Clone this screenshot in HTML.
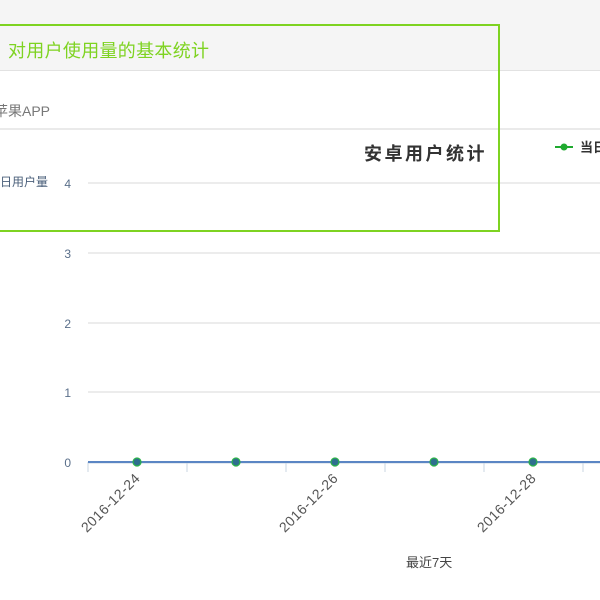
<!DOCTYPE html>
<html><head><meta charset="utf-8"><style>
body{margin:0;width:600px;height:600px;overflow:hidden;background:#fff;position:relative;font-family:"Liberation Sans","Noto Sans CJK SC",sans-serif}
.top{position:absolute;left:0;top:0;width:600px;height:70px;background:#f5f5f5;border-bottom:1px solid #e2e2e2}
.box{position:absolute;left:-3px;top:24px;width:499px;height:204px;border:2px solid #7ed321;box-sizing:content-box}
.t{position:absolute;left:8px;top:37px;font-size:18px;color:#7ed321;letter-spacing:0.3px}
.a{position:absolute;left:-6px;top:101px;font-size:14px;color:#777}
.l{position:absolute;left:0;top:128px;width:600px;height:2px;background:#eaeaea}
</style></head><body>
<div class="top"></div>
<div class="t">对用户使用量的基本统计</div>
<div class="a">苹果APP</div>
<div class="l"></div>
<svg width="600" height="600" style="position:absolute;left:0;top:0" font-family="Liberation Sans, Noto Sans CJK SC, sans-serif">
<g stroke="#e6e6e6" stroke-width="1.5">
<line x1="88" y1="183" x2="600" y2="183"/><line x1="88" y1="253" x2="600" y2="253"/><line x1="88" y1="323" x2="600" y2="323"/><line x1="88" y1="392" x2="600" y2="392"/>
</g>
<g stroke="#c8d4e0" stroke-width="1"><line x1="88" y1="462" x2="88" y2="472"/><line x1="187" y1="462" x2="187" y2="472"/><line x1="286" y1="462" x2="286" y2="472"/><line x1="385" y1="462" x2="385" y2="472"/><line x1="484" y1="462" x2="484" y2="472"/><line x1="583" y1="462" x2="583" y2="472"/><line x1="88" y1="463" x2="600" y2="463"/></g>
<line x1="88" y1="462" x2="600" y2="462" stroke="#5b86c4" stroke-width="2"/>
<g fill="#2e6e8e" stroke="#2cb34a" stroke-width="1.2"><circle cx="137" cy="462" r="4"/><circle cx="236" cy="462" r="4"/><circle cx="335" cy="462" r="4"/><circle cx="434" cy="462" r="4"/><circle cx="533" cy="462" r="4"/></g>
<g fill="#5a6f8a" font-size="12" text-anchor="end"><text x="71" y="188">4</text><text x="71" y="258">3</text><text x="71" y="328">2</text><text x="71" y="397">1</text><text x="71" y="467">0</text></g>
<text x="0" y="186" font-size="12" fill="#4a5f7a">日用户量</text>
<text x="364" y="160" font-size="18" font-weight="bold" fill="#333" letter-spacing="2.5">安卓用户统计</text>
<line x1="555" y1="147" x2="573" y2="147" stroke="#1faa2f" stroke-width="2"/><circle cx="564" cy="147" r="3.5" fill="#1faa2f"/>
<text x="580" y="152" font-size="13" font-weight="bold" fill="#333">当日</text>
<g font-size="14" fill="#555" text-anchor="end" letter-spacing="0.5">
<text transform="translate(141,479) rotate(-45)">2016-12-24</text>
<text transform="translate(339,479) rotate(-45)">2016-12-26</text>
<text transform="translate(537,479) rotate(-45)">2016-12-28</text>
</g>
<text x="406" y="567" font-size="13" fill="#444">最近7天</text>
</svg>
<div class="box"></div>
</body></html>
